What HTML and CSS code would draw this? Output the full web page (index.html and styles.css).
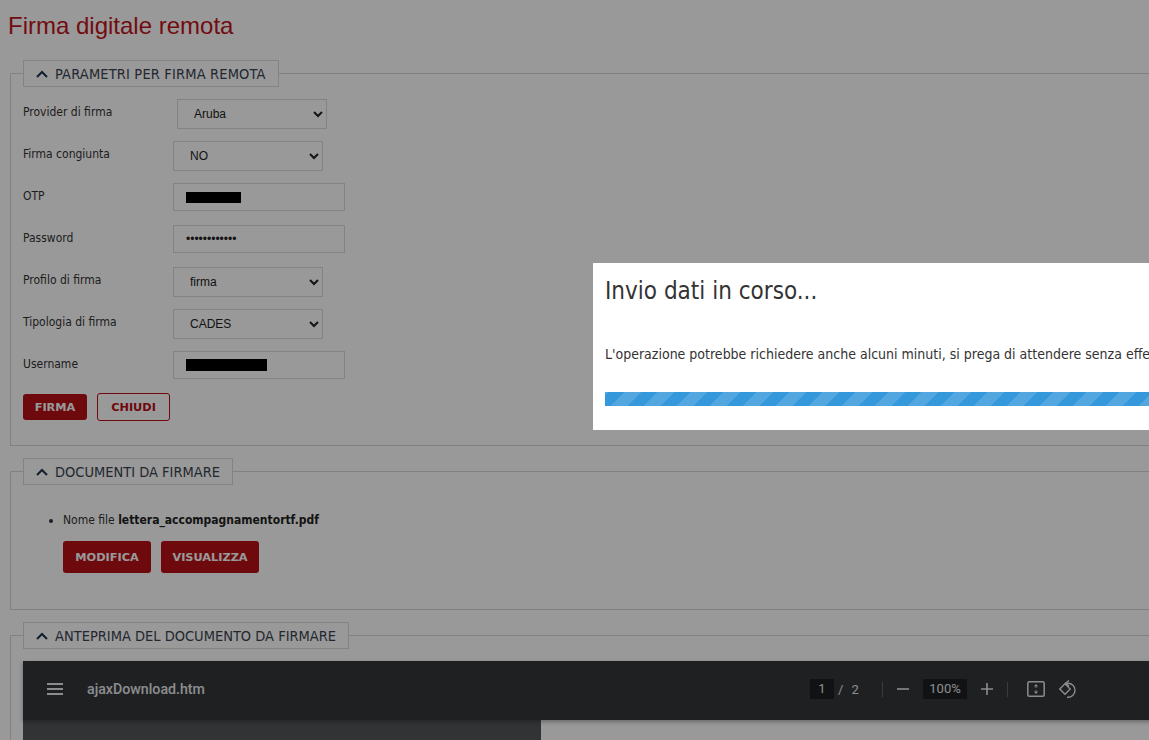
FILE: index.html
```html
<!DOCTYPE html>
<html lang="en">
<head>
    <meta charset="UTF-8">
    <meta name="viewport" content="width=device-width, initial-scale=1.0">
    <title>Firma digitale remota</title>
    <link rel="stylesheet" href="styles.css">
</head>
<body>
    <h1 class="title">Firma digitale remota</h1>

    <fieldset class="panel">
        <legend class="panel-head wide-head">
            <svg class="chevron" viewBox="0 0 12 8"><path d="M1 7l5-5 5 5"/></svg>
            PARAMETRI PER FIRMA REMOTA
        </legend>
        <div class="row">
            <label>Provider di firma</label>
            <select class="shift"><option>Aruba</option></select>
        </div>
        <div class="row">
            <label>Firma congiunta</label>
            <select><option>NO</option></select>
        </div>
        <div class="row">
            <label>OTP</label>
            <div class="field"><span class="redact otp"></span></div>
        </div>
        <div class="row">
            <label>Password</label>
            <input class="field" type="password" value="123456789012">
        </div>
        <div class="row">
            <label>Profilo di firma</label>
            <select><option>firma</option></select>
        </div>
        <div class="row">
            <label>Tipologia di firma</label>
            <select><option>CADES</option></select>
        </div>
        <div class="row">
            <label>Username</label>
            <div class="field"><span class="redact user"></span></div>
        </div>
        <div class="actions">
            <button class="btn small">FIRMA</button>
            <button class="btn outline">CHIUDI</button>
        </div>
    </fieldset>

    <fieldset class="panel docs">
        <legend class="panel-head">
            <svg class="chevron" viewBox="0 0 12 8"><path d="M1 7l5-5 5 5"/></svg>
            DOCUMENTI DA FIRMARE
        </legend>
        <ul class="files">
            <li>Nome file <b>lettera_accompagnamentortf.pdf</b></li>
        </ul>
        <div class="actions file-actions">
            <button class="btn modify">MODIFICA</button>
            <button class="btn show">VISUALIZZA</button>
        </div>
    </fieldset>

    <fieldset class="panel">
        <legend class="panel-head">
            <svg class="chevron" viewBox="0 0 12 8"><path d="M1 7l5-5 5 5"/></svg>
            ANTEPRIMA DEL DOCUMENTO DA FIRMARE
        </legend>
        <div class="viewer">
            <div class="toolbar">
                <svg class="menu-icon" viewBox="0 0 16 12"><path d="M0 1h16M0 6h16M0 11h16"/></svg>
                <span class="doc-name">ajaxDownload.htm</span>
                <div class="pager">
                    <span class="num-box page-box">1</span>
                    <span class="slash">/</span>
                    <span class="total">2</span>
                </div>
                <span class="sep"></span>
                <svg class="zoom-icon" viewBox="0 0 12 12"><path d="M0 6h12"/></svg>
                <span class="num-box zoom-box">100%</span>
                <svg class="zoom-icon" viewBox="0 0 12 12"><path d="M0 6h12M6 0v12"/></svg>
                <span class="sep"></span>
                <svg class="fit-icon" viewBox="0 0 18 16"><rect x="0.8" y="0.8" width="16.400" height="14.400" rx="1.500"/><path class="solid" d="M9 3l2.200 2.400H6.800zM9 13l-2.200-2.400h4.400zM8.400 6.200h1.200v.9H8.400zM8.400 8.900h1.200v.9H8.400z"/></svg>
                <svg class="rotate-icon" viewBox="0 0 18 18"><path d="M7.500 3.300h1.500a7 7 0 0 1 0 14H8"/><path d="M10 .5L6.500 3.300 10 6.100"/><path d="M6 3.800L11.200 9 6 14.200 .8 9z"/></svg>
            </div>
            <div class="viewer-body">
                <div class="pdf-bg"></div>
                <div class="pdf-page"></div>
            </div>
        </div>
    </fieldset>

    <div class="overlay"></div>
    <div class="modal">
        <h2>Invio dati in corso...</h2>
        <p>L'operazione potrebbe richiedere anche alcuni minuti, si prega di attendere senza effettuare altre operazioni.</p>
        <div class="progress"></div>
    </div>
</body>
</html>
```

FILE: styles.css
```css
html, body {
    height: 100%;
    overflow: hidden;
}

body {
    margin: 0 0 0 8px;
    background-color: #fff;
    color: #333;
    font-family: "DejaVu Sans Condensed", "DejaVu Sans", sans-serif;
    font-stretch: condensed;
    font-size: 12px;
}

.title {
    margin: 0 0 20px;
    padding-top: 12px;
    height: 28px;
    line-height: 28px;
    font-family: "Liberation Sans", Arial, sans-serif;
    font-stretch: normal;
    font-size: 24px;
    font-weight: normal;
    color: #c0141c;
}

.panel {
    margin: 0 -40px 12px 2px;
    padding: 0 12px 24px;
    border: 1px solid #d8d8d8;
    min-width: 0;
}

.docs {
    padding-bottom: 36px;
}

.panel-head {
    display: flex;
    align-items: center;
    height: 25px;
    padding: 0 12px;
    border: 1px solid #d8dae0;
    font-size: 14.5px;
    color: #3a4450;
}

.wide-head {
    letter-spacing: 0.16px;
}

.chevron {
    width: 12px;
    height: 8px;
    margin-right: 7px;
    fill: none;
    stroke: #1f3550;
    stroke-width: 2;
}

.row {
    display: flex;
    align-items: center;
    height: 42px;
}

.panel-head + .row {
    margin-top: 6px;
}

.row label {
    width: 150px;
    margin-top: -5px;
    align-self: center;
}

select {
    width: 150px;
    height: 30px;
    padding-left: 12px;
    border: 1px solid #d8dae0;
    background-color: #fff;
    font-family: "Liberation Sans", Arial, sans-serif;
    font-stretch: normal;
    font-size: 12px;
    color: #222;
}

.shift {
    margin-left: 4px;
}

.field {
    box-sizing: border-box;
    display: flex;
    align-items: center;
    width: 172px;
    height: 28px;
    margin-top: -2px;
    padding: 0 12px;
    border: 1px solid #d8dae0;
    background-color: #fff;
    font-size: 12px;
    color: #222;
}

.redact {
    display: block;
    background-color: #000;
}

.otp {
    width: 55px;
    height: 11px;
}

.user {
    width: 81px;
    height: 12px;
}

.actions {
    display: flex;
    align-items: center;
    gap: 10px;
    margin-top: 6px;
    height: 28px;
}

.btn {
    box-sizing: border-box;
    padding: 0;
    border: 0;
    border-radius: 3px;
    background-color: #b81018;
    color: #fff;
    font-family: "DejaVu Sans", sans-serif;
    font-stretch: normal;
    font-size: 11.3px;
    font-weight: bold;
}

.small {
    width: 64px;
    height: 26px;
}

.outline {
    width: 73px;
    height: 28px;
    border: 1px solid #b81018;
    background-color: #fff;
    color: #b81018;
}

.modify {
    width: 88px;
    height: 32px;
}

.show {
    width: 98px;
    height: 32px;
}

.files {
    margin: 0;
    padding: 25px 0 0 40px;
    line-height: 20px;
}

.files b {
    color: #222;
}

.file-actions {
    margin: 11px 0 0 40px;
    height: 32px;
}

.viewer {
    margin-top: 12px;
    background-color: #525659;
}

.toolbar {
    box-sizing: border-box;
    display: flex;
    align-items: center;
    height: 59px;
    padding-bottom: 3px;
    background-color: #323639;
    color: #e8eaed;
    box-shadow: 0 2px 4px rgba(0, 0, 0, 0.3);
    position: relative;
    font-family: Roboto, sans-serif;
    font-stretch: normal;
    font-size: 13px;
}

.menu-icon {
    width: 16px;
    height: 12px;
    margin-left: 24px;
    stroke: #e8eaed;
    stroke-width: 1.8;
    fill: none;
}

.doc-name {
    width: 723px;
    margin-left: 24px;
    font-size: 14.2px;
    font-weight: 500;
}

.pager {
    display: flex;
    align-items: center;
    width: 72px;
}

.num-box {
    display: block;
    height: 20px;
    line-height: 20px;
    text-align: center;
    background-color: #1c1e20;
}

.page-box {
    width: 24px;
}

.slash {
    margin-left: 4px;
}

.total {
    margin-left: 8px;
}

.sep {
    width: 1px;
    height: 15px;
    background-color: #5f6368;
}

.zoom-icon {
    width: 12px;
    height: 12px;
    margin: 0 14px;
    stroke: #e8eaed;
    stroke-width: 1.6;
    fill: none;
}

.zoom-box {
    width: 44px;
}

.fit-icon {
    width: 18px;
    height: 16px;
    margin-left: 19px;
    stroke: #e8eaed;
    stroke-width: 1.5;
    fill: none;
}

.rotate-icon {
    width: 18px;
    height: 18px;
    margin-left: 14px;
    stroke: #e8eaed;
    stroke-width: 1.4;
    fill: none;
}

.solid {
    fill: #e8eaed;
    stroke: none;
}

.viewer-body {
    display: flex;
    height: 300px;
}

.pdf-bg {
    width: 518px;
}

.pdf-page {
    flex: 1;
    background-color: #fff;
}

.overlay {
    position: fixed;
    inset: 0;
    background-color: rgba(0, 0, 0, 0.4);
}

.modal {
    position: fixed;
    left: 593px;
    top: 263px;
    width: 800px;
    height: 167px;
    background-color: #fff;
    padding: 0 12px;
    box-sizing: border-box;
    color: #333;
    white-space: nowrap;
}

.modal h2 {
    margin: 0;
    padding-top: 11px;
    height: 41px;
    line-height: 34px;
    font-size: 24px;
    font-weight: normal;
}

.modal p {
    margin: 0;
    padding-top: 29px;
    line-height: 20px;
    font-size: 14px;
}

.progress {
    margin-top: 28px;
    height: 14px;
    background-color: #3498db;
    background-image: repeating-linear-gradient(135deg, rgba(255, 255, 255, 0.15) 0, rgba(255, 255, 255, 0.15) 2.7px, transparent 2.7px, transparent 14.1px, rgba(255, 255, 255, 0.15) 14.1px, rgba(255, 255, 255, 0.15) 23.3px);
}
```
